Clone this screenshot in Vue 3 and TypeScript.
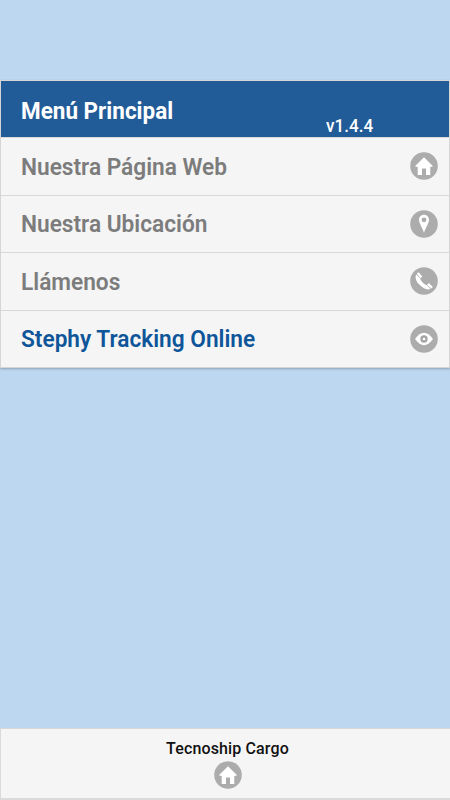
<script setup lang="ts">
type Icon = 'home' | 'location' | 'phone' | 'eye'

interface MenuItem {
  label: string
  icon: Icon
  active?: boolean
}

const items: MenuItem[] = [
  { label: 'Nuestra Página Web', icon: 'home' },
  { label: 'Nuestra Ubicación', icon: 'location' },
  { label: 'Llámenos', icon: 'phone' },
  { label: 'Stephy Tracking Online', icon: 'eye', active: true },
]
</script>

<template>
  <div class="page">
    <main class="menu">
      <header class="menu-header">
        <h1 class="title">Menú Principal</h1>
        <span class="version">v1.4.4</span>
      </header>
      <a v-for="item in items" :key="item.label" class="row" :class="{ active: item.active }">
        <span class="label">{{ item.label }}</span>
        <svg class="icon" viewBox="0 0 28 28">
          <circle cx="14" cy="14" r="13.8" fill="#acacac" />
          <path v-if="item.icon === 'home'" fill="#fff" d="M14 5.3 22.6 13.7V14.7H20.3V23H16V16.6H12V23H7.7V14.7H5.4V13.7Z" />
          <g v-else-if="item.icon === 'location'">
            <path fill="#fff" d="M14 4.8C11.2 4.8 9 7 9 9.8C9 13.2 12.3 17.5 14 22.8C15.7 17.5 19 13.2 19 9.8C19 7 16.8 4.8 14 4.8Z" />
            <circle cx="14" cy="9.8" r="2.4" fill="#acacac" />
          </g>
          <g v-else-if="item.icon === 'phone'" fill="#fff">
            <path d="M6.3 7.4C4.5 10 6.2 14.5 9.8 18.1C13.4 21.7 17.7 23.6 20.5 21.8L16.8 18C15.3 18.5 10 13.2 10.3 11.4Z" />
            <path d="M6.8 6.8 8.7 5.2 12.3 9.6 10.5 11.3Z" />
            <path d="M17.2 17.7 18.8 16.1 22.9 19.9 21.3 21.6Z" />
          </g>
          <g v-else>
            <path fill="#fff" d="M5 14C8.2 10 11 7.800 14 7.800S19.8 10 23 14C19.8 18.2 17 20.2 14 20.2S8.2 18.2 5 14Z" />
            <circle cx="14" cy="14" r="2.5" fill="#fff" stroke="#a6a6a6" stroke-width="2.4" />
          </g>
        </svg>
      </a>
    </main>
    <footer class="footer">
      <span class="company">Tecnoship Cargo</span>
      <svg class="icon" viewBox="0 0 28 28">
        <circle cx="14" cy="14" r="13.8" fill="#acacac" />
        <path fill="#fff" d="M14 5.3 22.6 13.7V14.7H20.3V23H16V16.6H12V23H7.7V14.7H5.4V13.7Z" />
      </svg>
    </footer>
  </div>
</template>

<style>
body {
  margin: 0;
}
</style>

<style scoped>
.page {
  box-sizing: border-box;
  display: flex;
  flex-direction: column;
  justify-content: space-between;
  height: 800px;
  padding-top: 80px;
  background: #bdd7f0;
  font-family: Roboto, sans-serif;
  overflow: hidden;
}
.menu {
  border: 1px solid #d5d5d5;
  background: #f5f5f5;
  box-shadow: 0 1px 2px rgba(0, 0, 0, 0.25);
}
.menu-header {
  display: flex;
  align-items: center;
  height: 56px;
  padding-left: 20px;
  background: #215c98;
  color: #fff;
}
.title {
  width: 305px;
  margin: 0;
  padding-top: 3px;
  font-size: 24px;
  line-height: 30px;
  font-weight: 700;
  transform: scaleX(0.937);
  transform-origin: left;
  white-space: nowrap;
}
.version {
  padding-top: 33px;
  font-size: 19px;
  line-height: 24px;
  font-weight: 500;
  transform: scaleX(0.9);
  transform-origin: left;
}
.row {
  box-sizing: border-box;
  display: flex;
  align-items: center;
  justify-content: space-between;
  height: 57.5px;
  padding: 0 11px 0 20px;
  border-top: 1px solid #d8d8d8;
  color: #7c7c7c;
}
.label {
  padding-top: 3px;
  font-size: 23px;
  line-height: 30px;
  font-weight: 600;
  transform: scaleX(0.985);
  transform-origin: left;
  white-space: nowrap;
}
.active {
  color: #0e5599;
}
.icon {
  display: block;
  width: 28px;
  height: 28px;
}
.footer {
  box-sizing: border-box;
  display: flex;
  flex-direction: column;
  align-items: center;
  height: 72px;
  padding: 10px 0 0 4px;
  border-top: 1px solid #d8d8d8;
  border-bottom: 2px solid #dadada;
  border-left: 1px solid #dadada;
  background: #f5f5f5;
  color: #111;
}
.company {
  margin-bottom: 2px;
  font-size: 16px;
  line-height: 20px;
  font-weight: 500;
  letter-spacing: 0.13px;
}
</style>
